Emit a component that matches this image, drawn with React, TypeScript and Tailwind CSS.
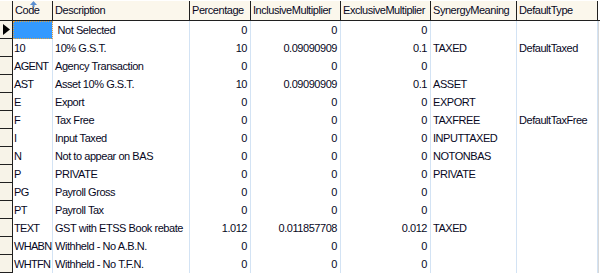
const cols = [
  { name: 'Code', w: 'w-[40px]', num: false },
  { name: 'Description', w: 'w-[137px]', num: false },
  { name: 'Percentage', w: 'w-[61px]', num: true },
  { name: 'InclusiveMultiplier', w: 'w-[90px]', num: true },
  { name: 'ExclusiveMultiplier', w: 'w-[90px]', num: true },
  { name: 'SynergyMeaning', w: 'w-[86px]', num: false },
  { name: 'DefaultType', w: 'w-[81px]', num: false },
]

const rows = [
  ['', '\u00a0Not Selected', '0', '0', '0', '', ''],
  ['10', '10% G.S.T.', '10', '0.09090909', '0.1', 'TAXED', 'DefaultTaxed'],
  ['AGENT', 'Agency Transaction', '0', '0', '0', '', ''],
  ['AST', 'Asset 10% G.S.T.', '10', '0.09090909', '0.1', 'ASSET', ''],
  ['E', 'Export', '0', '0', '0', 'EXPORT', ''],
  ['F', 'Tax Free', '0', '0', '0', 'TAXFREE', 'DefaultTaxFree'],
  ['I', 'Input Taxed', '0', '0', '0', 'INPUTTAXED', ''],
  ['N', 'Not to appear on BAS', '0', '0', '0', 'NOTONBAS', ''],
  ['P', 'PRIVATE', '0', '0', '0', 'PRIVATE', ''],
  ['PG', 'Payroll Gross', '0', '0', '0', '', ''],
  ['PT', 'Payroll Tax', '0', '0', '0', '', ''],
  ['TEXT', 'GST with ETSS Book rebate', '1.012', '0.011857708', '0.012', 'TAXED', ''],
  ['WHABN', 'Withheld - No A.B.N.', '0', '0', '0', '', ''],
  ['WHTFN', 'Withheld - No T.F.N.', '0', '0', '0', '', ''],
]

const App = () => {
  return (
    <div className="w-[600px] h-[273px] overflow-hidden bg-white text-[11px] leading-none tracking-[-0.45px] text-[#08081e] font-['Liberation_Sans',Arial,sans-serif]">
      {/* header */}
      <div className="flex h-[21px] bg-[#fbf7ec] border-t border-white border-b border-b-[#202020]">
        <div className="w-[13px] shrink-0 border-r border-[#202020]" />
        {cols.map((c, i) => (
          <div
            key={c.name}
            className={`${c.w} shrink-0 relative flex items-center pl-[2px] whitespace-nowrap overflow-hidden border-r border-[#202020]`}
          >
            {i === 0 && (
              <svg className="absolute left-[17px] top-0" width="7" height="6" viewBox="0 0 7 6">
                <path d="M3.5 0 L7 4 L4.5 4 L4.5 6 L2.5 6 L2.5 4 L0 4 Z" fill="#5b8fd0" />
              </svg>
            )}
            {c.name}
          </div>
        ))}
        <div className="flex-1 bg-white" />
      </div>
      {/* body */}
      {rows.map((r, ri) => (
        <div key={ri} className="flex h-[18px]">
          <div className="w-[13px] shrink-0 bg-[#f7f3e8] border-r border-b border-[#202020] flex items-center">
            {ri === 0 && (
              <svg width="8" height="11" viewBox="0 0 8 11" className="ml-[3px]">
                <path d="M0 0 L7 5.5 L0 11 Z" fill="#000" />
              </svg>
            )}
          </div>
          {cols.map((c, ci) => {
            const selected = ri === 0 && ci === 0
            return (
              <div
                key={c.name}
                className={`${c.w} shrink-0 flex items-center whitespace-nowrap overflow-hidden border-r border-[#d3e3f4] ${
                  c.num ? 'justify-end pr-[3px]' : ci === 0 ? 'pl-[1px] tracking-[-0.7px]' : 'pl-[2px]'
                } ${selected ? 'bg-[#3399ff] outline-1 outline-dotted outline-[#e0a040] -outline-offset-1' : ''}`}
              >
                {r[ci]}
              </div>
            )
          })}
          <div className="flex-1 border-l border-[#d8d8d8]" />
        </div>
      ))}
    </div>
  )
}

export default App
